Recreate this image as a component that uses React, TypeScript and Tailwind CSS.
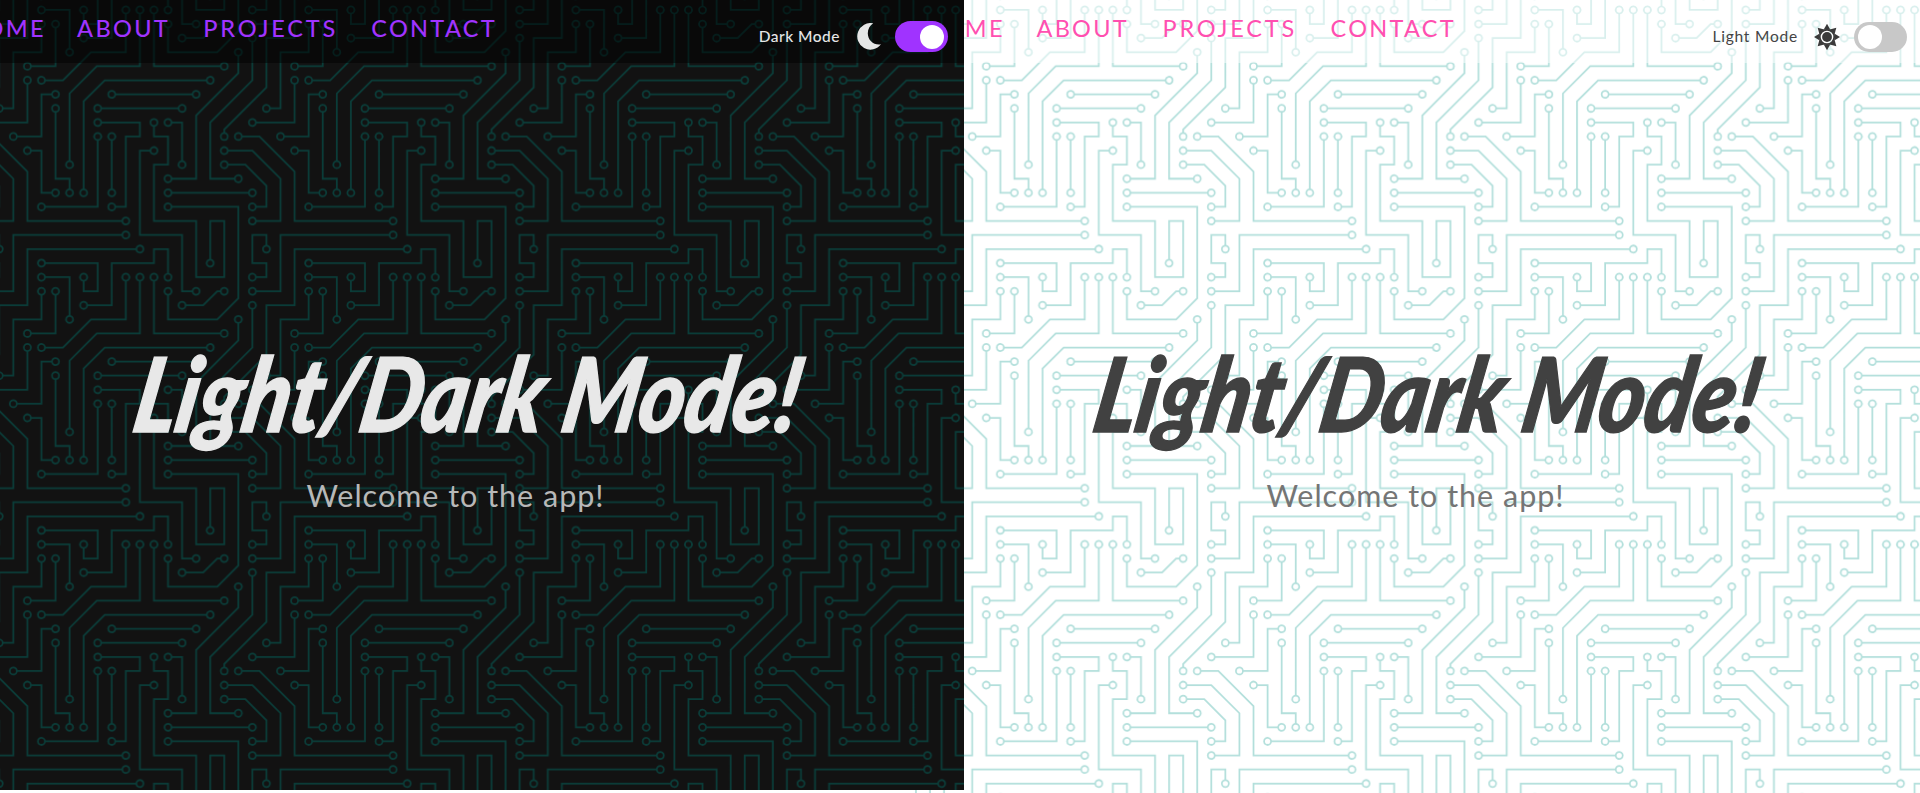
import React from 'react';

const TILE = 304;
const SCALE = 0.8791;

const TRACES =
  'M44.1 224a5 5 0 1 1 0 2H0v-2h44.1zm160 48a5 5 0 1 1 0 2H82v-2h122.1zm57.8-46a5 5 0 1 1 0-2H304v2h-42.1zm0 16a5 5 0 1 1 0-2H304v2h-42.1zm6.2-114a5 5 0 1 1 0 2h-86.2a5 5 0 1 1 0-2h86.2zm-256-48a5 5 0 1 1 0 2H0v-2h12.1zm185.8 34a5 5 0 1 1 0-2h86.2a5 5 0 1 1 0 2h-86.2zM258 12.1a5 5 0 1 1-2 0V0h2v12.1zm-64 208a5 5 0 1 1-2 0v-54.2a5 5 0 1 1 2 0v54.2zm48-198.2V80h62v2h-64V21.9a5 5 0 1 1 2 0zm16 16V64h46v2h-48V37.9a5 5 0 1 1 2 0zm-128 96V208h16v12.1a5 5 0 1 1-2 0V210h-16v-76.1a5 5 0 1 1 2 0zm-5.9-21.9a5 5 0 1 1 0 2H114v48H85.9a5 5 0 1 1 0-2H112v-48h12.1zm-6.2 130a5 5 0 1 1 0-2H176v-74.1a5 5 0 1 1 2 0V242h-60.1zm-16-64a5 5 0 1 1 0-2H114v48h10.1a5 5 0 1 1 0 2H112v-48h-10.1zM66 284.1a5 5 0 1 1-2 0V274H50v30h-2v-32h18v12.1zM236.1 176a5 5 0 1 1 0 2H226v94h48v32h-2v-30h-48v-98h12.1zm25.8-30a5 5 0 1 1 0-2H274v44.1a5 5 0 1 1-2 0V146h-10.1zm-64 96a5 5 0 1 1 0-2H208v-80h16v-14h-42.1a5 5 0 1 1 0-2H226v18h-16v80h-12.1zm86.2-210a5 5 0 1 1 0 2H272V0h2v32h10.1zM98 101.9V146H53.9a5 5 0 1 1 0-2H96v-42.1a5 5 0 1 1 2 0zM53.9 34a5 5 0 1 1 0-2H80V0h2v34H53.9zm60.1 3.9V66H82v64H69.9a5 5 0 1 1 0-2H80V64h32V37.9a5 5 0 1 1 2 0zM101.9 82a5 5 0 1 1 0-2H128V37.9a5 5 0 1 1 2 0V82h-28.1zm16-64a5 5 0 1 1 0-2H146v44.1a5 5 0 1 1-2 0V18h-26.1zm102.2 270a5 5 0 1 1 0 2H98v14h-2v-16h124.1zM242 149.9V160h16v34h-16v62h48v48h-2v-46h-48v-66h16v-30h-16v-12.1a5 5 0 1 1 2 0zM53.9 18a5 5 0 1 1 0-2H64V2H48V0h18v18H53.9zm112 32a5 5 0 1 1 0-2H192V0h50v2h-48v48h-28.1zm-48-48a5 5 0 0 1-9.8-2h2.07a3 3 0 1 0 5.66 0H178v34h-18V21.9a5 5 0 1 1 2 0V32h14V2h-58.1zm0 96a5 5 0 1 1 0-2H137l32-32h39V21.9a5 5 0 1 1 2 0V66h-40.17l-32 32H117.9zm28.1 90.1a5 5 0 1 1-2 0v-76.51L175.59 80H224V21.9a5 5 0 1 1 2 0V82h-49.59L146 112.41v75.69zm16 32a5 5 0 1 1-2 0v-99.51L184.59 96H300.1a5 5 0 0 1 3.9-3.9v2.07a3 3 0 0 0 0 5.66v2.07a5 5 0 0 1-3.9-3.9H185.41L162 121.41v98.69zm-144-64a5 5 0 1 1-2 0v-3.51l48-48V48h32V0h2v50H66v55.41l-48 48v2.69zM50 53.9v43.51l-48 48V208h26.1a5 5 0 1 1 0 2H0v-65.41l48-48V53.9a5 5 0 1 1 2 0zm-16 16V89.41l-34 34v-2.82l32-32V69.9a5 5 0 1 1 2 0zM12.1 32a5 5 0 1 1 0 2H9.41L0 43.41V40.6L8.59 32h3.51zm265.8 18a5 5 0 1 1 0-2h18.69l7.41-7.41v2.82L297.41 50H277.9zm-16 160a5 5 0 1 1 0-2H288v-71.41l16-16v2.82l-14 14V210h-28.1zm-208 32a5 5 0 1 1 0-2H64v-22.59L40.59 194H21.9a5 5 0 1 1 0-2H41.41L66 216.59V242H53.9zm150.2 14a5 5 0 1 1 0 2H96v-56.6L56.6 162H37.9a5 5 0 1 1 0-2h19.5L98 200.6V256h106.1zm-150.2 2a5 5 0 1 1 0-2H80v-46.59L48.59 178H21.9a5 5 0 1 1 0-2H49.41L82 208.59V258H53.9zM34 39.8v1.61L9.41 66H0v-2h8.59L32 40.59V0h2v39.8zM2 300.1a5 5 0 0 1 3.9 3.9H3.83A3 3 0 0 0 0 302.17V256h18v48h-2v-46H2v42.1zM34 241v63h-2v-62H0v-2h34v1zM17 18H0v-2h16V0h2v18h-1zm273-2h14v2h-16V0h2v16zm-32 273v15h-2v-14h-14v14h-2v-16h18v1zM0 92.1A5.02 5.02 0 0 1 6 97a5 5 0 0 1-6 4.9v-2.07a3 3 0 1 0 0-5.66V92.1zM80 272h2v32h-2v-32zm37.9 32h-2.07a3 3 0 0 0-5.66 0h-2.07a5 5 0 0 1 9.8 0zM5.9 0A5.02 5.02 0 0 1 0 5.9V3.83A3 3 0 0 0 3.83 0H5.9zm294.2 0h2.07A3 3 0 0 0 304 3.83V5.9a5 5 0 0 1-3.9-5.9zm3.9 300.1v2.07a3 3 0 0 0-1.83 1.83h-2.07a5 5 0 0 1 3.9-3.9z';

/** Walks the trace outline and collects the centre of every full solder pad. */
function findPads(path: string): Array<[number, number]> {
  const pads: Array<[number, number]> = [];
  let x = 0;
  let y = 0;
  let startX = 0;
  let startY = 0;
  for (const segment of path.match(/[a-zA-Z][^a-zA-Z]*/g) ?? []) {
    const op = segment[0];
    const n = (segment.slice(1).match(/-?\d*\.?\d+/g) ?? []).map(Number);
    const relative = op === op.toLowerCase();
    const baseX = relative ? x : 0;
    const baseY = relative ? y : 0;
    switch (op.toLowerCase()) {
      case 'm':
        x = baseX + n[0];
        y = baseY + n[1];
        startX = x;
        startY = y;
        break;
      case 'l':
        x = baseX + n[0];
        y = baseY + n[1];
        break;
      case 'h':
        x = baseX + n[0];
        break;
      case 'v':
        y = baseY + n[0];
        break;
      case 'a': {
        if (relative && n[0] === 5 && n[3] === 1 && n[4] === 1) {
          pads.push([x + n[5] / 2 + n[6] * 2.45, y + n[6] / 2 - n[5] * 2.45]);
        }
        x = baseX + n[5];
        y = baseY + n[6];
        break;
      }
      case 'z':
        x = startX;
        y = startY;
        break;
    }
  }
  return pads;
}

const HOLES = findPads(TRACES)
  .map(([cx, cy]) => `M${cx - 3} ${cy}a3 3 0 1 0 6 0a3 3 0 1 0-6 0z`)
  .join('');

function Circuit({ id, x, y, className }: { id: string; x: number; y: number; className: string }) {
  return (
    <svg className={`absolute top-0 right-0 h-full ${className}`} aria-hidden="true">
      <defs>
        <pattern
          id={id}
          width={TILE}
          height={TILE}
          patternUnits="userSpaceOnUse"
          patternTransform={`translate(${x} ${y}) scale(${SCALE})`}
        >
          <path d={TRACES + HOLES} fill="currentColor" fillRule="evenodd" />
        </pattern>
      </defs>
      <rect width="100%" height="100%" fill={`url(#${id})`} />
    </svg>
  );
}

function Moon() {
  return (
    <svg viewBox="0 0 24 27" className="mr-3.5 ml-[17px] h-[27px] w-6 text-[#e6e6e6]" fill="currentColor">
      <path d="M16.200.3A13.200 13.300 0 1 0 24 21.300C17 22.500 10.800 17.500 10.800 10.200C10.800 6 12.800 2.500 16.200.3z" />
    </svg>
  );
}

function Sun() {
  const rays = Array.from({ length: 8 }, (_, i) => i * 45);
  return (
    <svg viewBox="-13 -13 26 26" className="mr-3.5 ml-4 size-[26px] text-[#3a3a3a]" fill="currentColor">
      {rays.map((angle) => (
        <path key={angle} d="M0-13.200L3.400-7.300H-3.400z" transform={`rotate(${angle})`} />
      ))}
      <circle r="7.200" fill="none" stroke="currentColor" strokeWidth="1.700" />
      <circle r="4.900" />
    </svg>
  );
}

const LINKS = [
  { label: 'HOME', size: 'w-[77px] tracking-[2.4px]' },
  { label: 'ABOUT', size: 'w-[91px] tracking-[2.3px]' },
  { label: 'PROJECTS', size: 'w-[135px] tracking-[2.8px]' },
  { label: 'CONTACT', size: 'w-[126px] tracking-[2.3px]' },
];

function Nav({ className }: { className: string }) {
  return (
    <nav className={`flex shrink-0 gap-[33px] pt-[13px] ${className}`}>
      {LINKS.map(({ label, size }) => (
        <a
          key={label}
          href="#"
          className={`flex h-8 shrink-0 items-center justify-end text-[23.5px] whitespace-nowrap ${size}`}
        >
          {label}
        </a>
      ))}
    </nav>
  );
}

function Hero({ title, text }: { title: string; text: string }) {
  return (
    <section className="relative flex flex-col items-center">
      <h1
        className={`mt-[267px] mr-[25px] h-[125px] origin-center -skew-x-12 scale-y-[1.18] text-[87.5px] leading-[125px] font-black whitespace-nowrap italic [-webkit-text-stroke:1.2px_currentColor] ${title}`}
      >
        Light/Dark Mode!
      </h1>
      <p className={`mt-[20px] mr-[53px] h-10 text-[30.5px] leading-10 tracking-[1px] whitespace-nowrap ${text}`}>
        Welcome to the app!
      </p>
    </section>
  );
}

export default function App() {
  return (
    <div className="relative flex h-[793px] w-[1920px] items-start overflow-hidden bg-white font-['Lato',sans-serif]">
      <Circuit id="circuit-light" x={-9} y={-5} className="w-[1010px] text-[#b2dfdb]" />
      <main className="relative h-[790px] w-[964px] shrink-0 overflow-hidden bg-[#121212]">
        <Circuit id="circuit-dark" x={-57.9} y={-5} className="w-full text-[#0a3d39]" />
        <header className="relative flex h-[63px] justify-between bg-black/50 pr-4">
          <Nav className="-ml-[31px] font-medium text-[#a033ff]" />
          <div className="flex h-[73px] items-center">
            <span className="text-[15.5px] font-medium tracking-[0.5px] text-[#e6e6e6]">Dark Mode</span>
            <Moon />
            <span className="flex h-[31px] w-[53px] items-center justify-end rounded-full bg-[#a033ff] pr-1">
              <span className="size-6 rounded-full bg-white" />
            </span>
          </div>
        </header>
        <Hero title="text-[#e8e8e8]" text="text-[#b8b8b8]" />
      </main>
      <main className="relative h-[793px] w-[956px] shrink-0 overflow-hidden">
        <header className="relative flex h-[63px] justify-between bg-white/50 pr-[13px]">
          <Nav className="-ml-[36px] text-[#ff4fb0]" />
          <div className="flex h-[73px] items-center">
            <span className="text-[15.5px] tracking-[0.8px] text-[#444]">Light Mode</span>
            <Sun />
            <span className="flex h-[30px] w-[53px] items-center rounded-full bg-[#c8c8c8] pl-1">
              <span className="size-6 rounded-full bg-white" />
            </span>
          </div>
        </header>
        <Hero title="text-[#414141]" text="text-[#757575]" />
      </main>
    </div>
  );
}
